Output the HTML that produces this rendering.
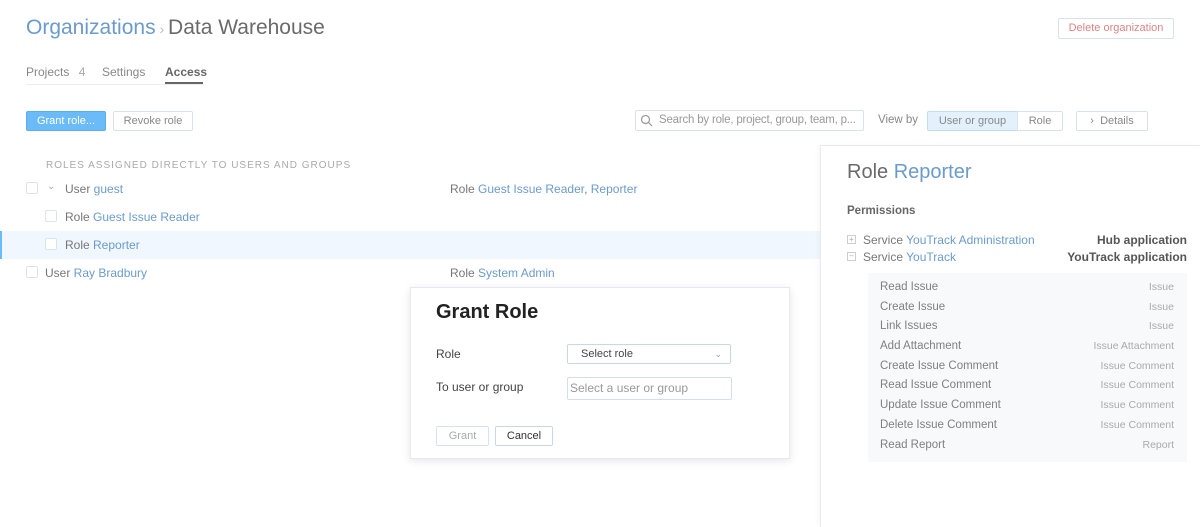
<!DOCTYPE html>
<html><head><style>
*{box-sizing:border-box;margin:0;padding:0}
body{width:1200px;height:527px;overflow:hidden;background:#fff;font-family:"Liberation Sans",sans-serif;color:#777;position:relative;font-size:12px}
.a{position:absolute;white-space:nowrap}
.blue{color:#6b9bcb}
.btn{position:absolute;white-space:nowrap;overflow:hidden;border:1px solid #d6e3ef;border-radius:2px;background:#fff;font-size:11px;text-align:center;color:#888}
.cb{position:absolute;width:12px;height:12px;border:1px solid #dde3ea;border-radius:2px;background:#fff}
.perm{display:flex;justify-content:space-between;height:19.7px;line-height:19.7px;font-size:11.5px;color:#808080}
.perm span:last-child{color:#aaa;font-size:10.5px}
</style></head><body>
<div class="a" style="left:26px;top:16px;font-size:21px;"><span class="blue">Organizations</span><span style="color:#bbb;font-size:14px"> › </span><span style="color:#6a6a6a">Data Warehouse</span></div>
<div class="btn" style="left:1058px;top:18px;width:116px;height:21px;line-height:19px;color:#d98585">Delete organization</div>
<div class="a" style="left:26px;top:65px;font-size:12px;color:#888">Projects <span style="color:#aaa;margin-left:6px">4</span></div>
<div class="a" style="left:102px;top:65px;font-size:12px;color:#888">Settings</div>
<div class="a" style="left:165px;top:65px;font-size:12px;color:#666;font-weight:bold">Access</div>
<div class="a" style="left:26px;top:84px;width:178px;height:1px;background:#eee"></div>
<div class="a" style="left:165px;top:82px;width:38px;height:2px;background:#666"></div>
<div class="btn" style="left:26px;top:111px;width:80px;height:20px;line-height:18px;background:#6bbbf9;border-color:#5aaee8;color:#fff">Grant role...</div>
<div class="btn" style="left:113px;top:111px;width:80px;height:20px;line-height:18px">Revoke role</div>
<div class="btn" style="left:635px;top:110px;width:229px;height:21px;line-height:19px;text-align:left;padding-left:23px;color:#999;font-size:11.5px;letter-spacing:-0.2px">Search by role, project, group, team, p...</div>
<svg class="a" style="left:640px;top:114px" width="13" height="13"><circle cx="5.5" cy="5.5" r="4" fill="none" stroke="#999" stroke-width="1.2"/><path d="M8.5 8.5L12 12" stroke="#999" stroke-width="1.2"/></svg>
<div class="a" style="left:878px;top:114px;font-size:11.5px;color:#888">View by</div>
<div class="btn" style="left:927px;top:111px;width:91px;height:20px;line-height:18px;background:#e3f1fd;border-color:#c4dcf2;border-radius:2px 0 0 2px">User or group</div>
<div class="btn" style="left:1017px;top:111px;width:46px;height:20px;line-height:18px;border-radius:0 2px 2px 0">Role</div>
<div class="btn" style="left:1076px;top:111px;width:72px;height:20px;line-height:18px">›&nbsp; Details</div>
<div class="a" style="left:46px;top:160px;font-size:10px;letter-spacing:1px;color:#aaa">ROLES ASSIGNED DIRECTLY TO USERS AND GROUPS</div>
<div class="cb" style="left:26px;top:182px"></div>
<div class="a" style="left:47px;top:181px;color:#aaa;font-size:10px">⌄</div>
<div class="a" style="left:65px;top:182px;font-size:12px">User <span class="blue">guest</span></div>
<div class="a" style="left:450px;top:182px;font-size:12px">Role <span class="blue">Guest Issue Reader</span>, <span class="blue">Reporter</span></div>
<div class="cb" style="left:45px;top:210px"></div>
<div class="a" style="left:65px;top:210px;font-size:12px">Role <span class="blue">Guest Issue Reader</span></div>
<div class="a" style="left:0;top:231px;width:820px;height:28px;background:#f0f7fe;border-left:2px solid #6bbbf9"></div>
<div class="cb" style="left:45px;top:238px"></div>
<div class="a" style="left:65px;top:238px;font-size:12px">Role <span class="blue">Reporter</span></div>
<div class="cb" style="left:26px;top:266px"></div>
<div class="a" style="left:45px;top:266px;font-size:12px">User <span class="blue">Ray Bradbury</span></div>
<div class="a" style="left:450px;top:266px;font-size:12px">Role <span class="blue">System Admin</span></div>
<div class="a" style="left:820px;top:145px;width:380px;height:382px;border-left:1px solid #e8ecf0;border-top:1px solid #e8ecf0;box-shadow:-2px 0 4px rgba(0,0,0,0.03)"></div>
<div class="a" style="left:847px;top:161px;font-size:20px;color:#6a6a6a">Role <span class="blue">Reporter</span></div>
<div class="a" style="left:847px;top:205px;font-size:11.5px;font-weight:bold;color:#666">Permissions</div>
<div class="a" style="left:847px;top:235px;width:9px;height:9px;border:1px solid #ccd;font-size:8px;line-height:7px;text-align:center;color:#aab">+</div>
<div class="a" style="left:863px;top:233px;font-size:12px">Service <span class="blue">YouTrack Administration</span></div>
<div class="a" style="right:13px;top:233px;font-size:12px;font-weight:bold;color:#555">Hub application</div>
<div class="a" style="left:847px;top:252px;width:9px;height:9px;border:1px solid #ccd;font-size:8px;line-height:6px;text-align:center;color:#aab">–</div>
<div class="a" style="left:863px;top:250px;font-size:12px">Service <span class="blue">YouTrack</span></div>
<div class="a" style="right:13px;top:250px;font-size:12px;font-weight:bold;color:#555">YouTrack application</div>
<div class="a" style="left:868px;top:273px;width:319px;height:189px;background:#f8f9fb;padding:5px 13px 0 12px">
<div class="perm"><span>Read Issue</span><span>Issue</span></div>
<div class="perm"><span>Create Issue</span><span>Issue</span></div>
<div class="perm"><span>Link Issues</span><span>Issue</span></div>
<div class="perm"><span>Add Attachment</span><span>Issue Attachment</span></div>
<div class="perm"><span>Create Issue Comment</span><span>Issue Comment</span></div>
<div class="perm"><span>Read Issue Comment</span><span>Issue Comment</span></div>
<div class="perm"><span>Update Issue Comment</span><span>Issue Comment</span></div>
<div class="perm"><span>Delete Issue Comment</span><span>Issue Comment</span></div>
<div class="perm"><span>Read Report</span><span>Report</span></div>
</div>
<div class="a" style="left:410px;top:287px;width:380px;height:172px;background:#fff;border:1px solid #e6eaee;box-shadow:0 2px 8px rgba(0,0,0,0.1)"></div>
<div class="a" style="left:436px;top:301px;font-size:20px;font-weight:bold;color:#222">Grant Role</div>
<div class="a" style="left:436px;top:347px;font-size:12px;color:#444">Role</div>
<div class="btn" style="left:567px;top:344px;width:164px;height:20px;line-height:18px;text-align:left;padding-left:13px;color:#444;border-color:#c9d8e6">Select role<span style="position:absolute;right:8px;color:#999;font-size:9px">⌄</span></div>
<div class="a" style="left:436px;top:380px;font-size:12px;color:#444">To user or group</div>
<div class="btn" style="left:567px;top:377px;width:165px;height:23px;line-height:21px;text-align:left;padding-left:2px;color:#999;font-size:12px;border-color:#d2dfea">Select a user or group</div>
<div class="btn" style="left:436px;top:426px;width:53px;height:20px;line-height:18px;color:#aaa">Grant</div>
<div class="btn" style="left:495px;top:426px;width:58px;height:20px;line-height:18px;color:#333;border-color:#c9d8e6">Cancel</div>
</body></html>
